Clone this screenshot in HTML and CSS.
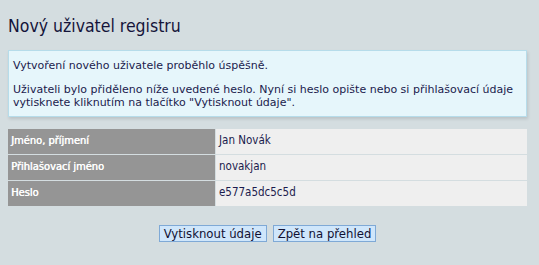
FILE: index.html
```html
<!DOCTYPE html>
<html lang="cs">
<head>
  <meta charset="UTF-8">
  <title>Nový uživatel registru</title>
  <link rel="stylesheet" href="styles.css">
</head>
<body>

<div class="page">
  <h1>Nový uživatel registru</h1>

  <!-- Info box -->
  <div class="info-box">
    <p>Vytvoření nového uživatele proběhlo úspěšně.</p>
    <p>Uživateli bylo přiděleno níže uvedené heslo. Nyní si heslo opište nebo si přihlašovací údaje vytisknete kliknutím na tlačítko "Vytisknout údaje".</p>
  </div>

  <!-- User details -->
  <div class="details">
    <div class="label">Jméno, příjmení</div>
    <div class="value">Jan Novák</div>
    <div class="label">Přihlašovací jméno</div>
    <div class="value">novakjan</div>
    <div class="label">Heslo</div>
    <div class="value">e577a5dc5c5d</div>
  </div>

  <div class="actions">
    <button type="button">Vytisknout údaje</button>
    <button type="button">Zpět na přehled</button>
  </div>
</div>

</body>
</html>
```

FILE: styles.css
```css
body {
  font-family: 'DejaVu Sans Condensed', 'DejaVu Sans', sans-serif;
  font-size: 11px;
  margin: 0;
  padding: 8px;
  background: #d4dde0;
  color: #1b1b4d;
}
.page {
  width: 519px;
}
h1 {
  font-size: 17.5px;
  font-weight: normal;
  line-height: 24px;
  margin: 6px 0 12px;
  color: #14143a;
}
.info-box {
  font-family: 'DejaVu Sans', sans-serif;
  background: #e6f6fb;
  border: 1px solid #b6dcea;
  box-shadow: 1px 2px 3px rgba(0, 0, 0, 0.12);
  padding: 8px 4px 7px;
}
.info-box p {
  margin: 0;
  line-height: 13px;
}
.info-box p + p {
  margin-top: 11px;
}
.details {
  display: grid;
  grid-template-columns: 207px 1fr;
  gap: 1px;
  margin-top: 12px;
}
.label,
.value {
  height: 25px;
  box-sizing: border-box;
  padding: 5px 4px 0;
  line-height: 13px;
}
.label {
  background: #959595;
  color: #ffffff;
  text-shadow: 0.4px 0 0 #ffffff;
  padding-left: 3px;
}
.value {
  background: #efefef;
  font-size: 11.5px;
  padding-left: 3px;
}
.actions {
  display: flex;
  justify-content: center;
  gap: 6px;
  margin-top: 19px;
}
button {
  font-family: inherit;
  font-size: 13px;
  color: #111133;
  background: #cfe6fb;
  border: 1px solid #7fa9d6;
  border-radius: 0;
  height: 17px;
  padding: 0 4px;
  line-height: 15px;
  cursor: pointer;
}
```
